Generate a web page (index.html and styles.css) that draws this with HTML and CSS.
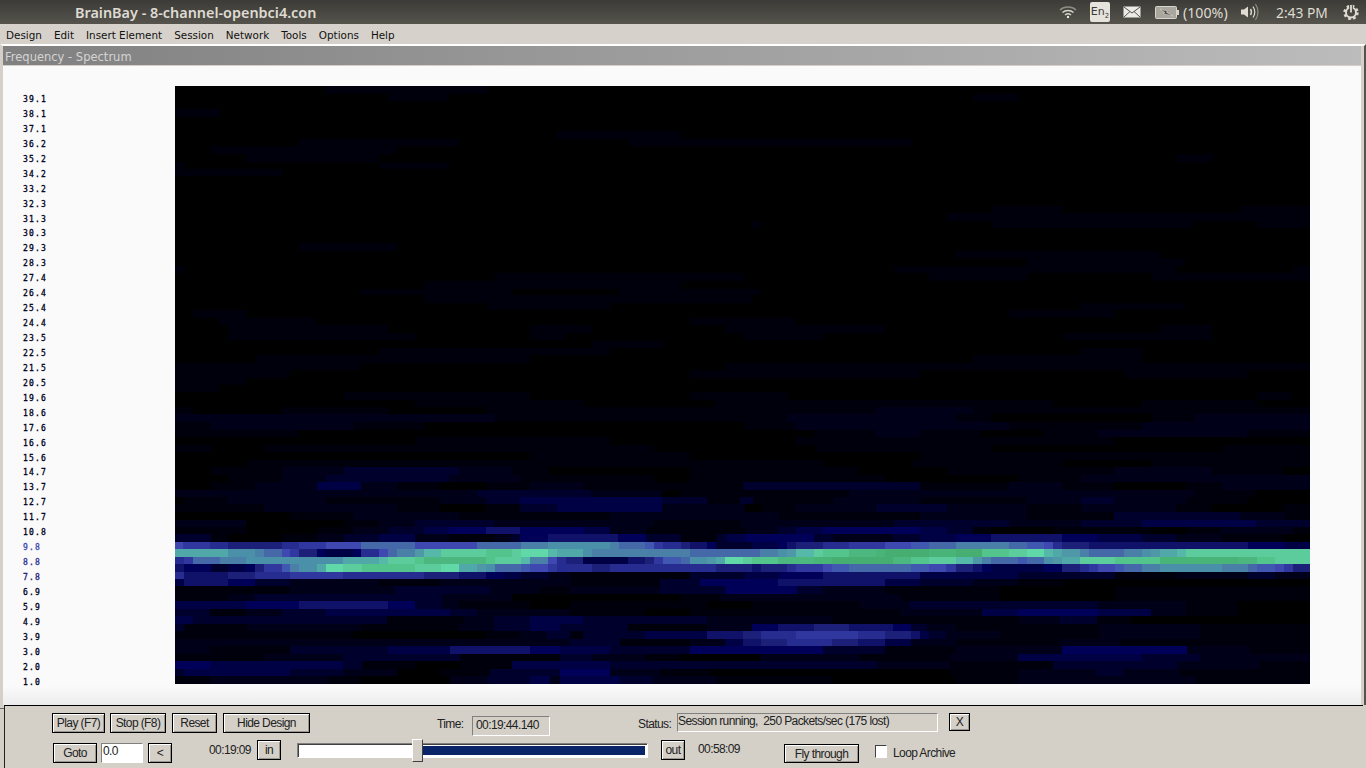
FILE: index.html
```html
<!DOCTYPE html>
<html lang="en">
<head>
    <meta charset="UTF-8">
    <title>BrainBay - 8-channel-openbci4.con</title>
    <link rel="stylesheet" href="styles.css">
</head>
<body>

<header class="topbar">
    <div class="app-title">BrainBay - 8-channel-openbci4.con</div>
    <div class="tray">
        <svg class="tray-wifi" width="18" height="14" viewBox="0 0 18 14" fill="none" stroke="#d8d4cb" stroke-width="1.5">
            <path d="M1 5 C5 1 13 1 17 5" stroke="#8f8c85"/>
            <path d="M3.5 7.5 C6.5 4.8 11.5 4.8 14.5 7.5"/>
            <path d="M6 10 C8 8.4 10 8.4 12 10"/>
            <circle cx="9" cy="12" r="1.2" fill="#ecebe6" stroke="none"/>
        </svg>
        <div class="tray-lang">En<sub>2</sub></div>
        <svg class="tray-mail" width="18" height="12" viewBox="0 0 18 12">
            <rect x="0.5" y="0.5" width="17" height="11" fill="#ecebe6"/>
            <path d="M1 1 L9 7 L17 1 M1 11 L7 5.5 M17 11 L11 5.5" fill="none" stroke="#55534d"/>
        </svg>
        <svg class="tray-battery" width="24" height="13" viewBox="0 0 24 13">
            <rect x="0.5" y="0.5" width="21" height="12" rx="1" fill="#a9a69e" stroke="#d8d4cb"/>
            <rect x="22" y="4" width="2" height="5" fill="#d8d4cb"/>
            <path d="M5 3 L13 5.6 L11.5 6.4 L18 10 L8 7.4 L10 6.4 Z" fill="#3c3b37" stroke="#e6e3dc" stroke-width="0.5"/>
        </svg>
        <div class="tray-text tray-pct">(100%)</div>
        <svg class="tray-sound" width="20" height="18" viewBox="0 0 20 18" fill="none">
            <path d="M1 6.5 H4 L8 3.5 V14.5 L4 11.5 H1 Z" fill="#dfdbd2"/>
            <path d="M10.5 6 C11.8 8 11.8 10 10.5 12" stroke="#dfdbd2" stroke-width="1.4"/>
            <path d="M13 3.5 C15.3 7 15.3 11 13 14.5" stroke="#dfdbd2" stroke-width="1.2"/>
            <path d="M15.5 1 C18.6 6 18.6 12 15.5 17" stroke="#8f8c85" stroke-width="1.2"/>
        </svg>
        <div class="tray-text tray-clock">2:43 PM</div>
        <svg class="tray-power" width="16" height="16" viewBox="0 0 16 16" fill="none" stroke="#dfdbd2">
            <circle cx="8" cy="8.5" r="5" stroke-width="2"/>
            <circle cx="8" cy="8.5" r="6.5" stroke-width="2.4" stroke-dasharray="2.6 2.5"/>
            <path d="M8 1 V9" stroke="#47453f" stroke-width="3.6"/>
            <path d="M8 1 V8.5" stroke-width="1.8"/>
        </svg>
    </div>
</header>

<nav class="menubar">
    <span>Design</span>
    <span>Edit</span>
    <span>Insert Element</span>
    <span>Session</span>
    <span>Network</span>
    <span>Tools</span>
    <span>Options</span>
    <span>Help</span>
</nav>

<main class="window">
    <div class="window-title">Frequency - Spectrum</div>
    <div class="spectrum-view">
        <ul class="freq-labels">
            <li>39.1</li><li>38.1</li><li>37.1</li><li>36.2</li><li>35.2</li>
            <li>34.2</li><li>33.2</li><li>32.3</li><li>31.3</li><li>30.3</li>
            <li>29.3</li><li>28.3</li><li>27.4</li><li>26.4</li><li>25.4</li>
            <li>24.4</li><li>23.5</li><li>22.5</li><li>21.5</li><li>20.5</li>
            <li>19.6</li><li>18.6</li><li>17.6</li><li>16.6</li><li>15.6</li>
            <li>14.7</li><li>13.7</li><li>12.7</li><li>11.7</li><li>10.8</li>
            <li class="lvl-high">9.8</li><li class="lvl-mid">8.8</li><li class="lvl-low">7.8</li>
            <li>6.9</li><li>5.9</li><li>4.9</li><li>3.9</li><li>3.0</li><li>2.0</li><li>1.0</li>
        </ul>
        <canvas id="spectrum" width="1135" height="598"></canvas>
    </div>
</main>

<section class="controls">
    <div class="ctl-row ctl-row-top">
        <button class="btn btn-play">Play (F7)</button>
        <button class="btn btn-stop">Stop (F8)</button>
        <button class="btn btn-reset">Reset</button>
        <button class="btn btn-hide">Hide Design</button>
        <span class="lbl lbl-time">Time:</span>
        <div class="readout readout-time">00:19:44.140</div>
        <span class="lbl lbl-status">Status:</span>
        <div class="readout readout-status">Session running,&nbsp; 250 Packets/sec (175 lost)</div>
        <button class="btn btn-close">X</button>
    </div>
    <div class="ctl-row ctl-row-bottom">
        <button class="btn btn-goto">Goto</button>
        <div class="goto-input">0.0</div>
        <button class="btn btn-prev">&lt;</button>
        <span class="lbl lbl-start">00:19:09</span>
        <button class="btn btn-in">in</button>
        <div class="slider">
            <div class="slider-left"></div>
            <div class="slider-right"></div>
            <div class="slider-thumb"></div>
        </div>
        <button class="btn btn-out">out</button>
        <span class="lbl lbl-end">00:58:09</span>
        <button class="btn btn-fly">Fly through</button>
        <div class="checkbox"></div>
        <span class="lbl lbl-loop">Loop Archive</span>
    </div>
</section>

<script src="spectrum.js"></script>
</body>
</html>
```

FILE: styles.css
```css
body {
    margin: 0;
    width: 1366px;
    height: 768px;
    overflow: hidden;
    display: flex;
    flex-direction: column;
    background-color: #d4d0c8;
    font-family: 'Liberation Sans', Arial, sans-serif;
}

/* desktop panel */
.topbar {
    height: 24px;
    flex: none;
    display: flex;
    align-items: center;
    justify-content: space-between;
    background: linear-gradient(#3c3b37, #55534c);
    color: #dfdbd2;
}
.app-title {
    margin-left: 75px;
    font-family: 'Noto Sans', sans-serif;
    font-size: 14.4px;
    font-weight: 600;
    white-space: nowrap;
}
.tray {
    display: flex;
    align-items: center;
    height: 24px;
}
.tray-wifi { margin-right: 13px; }
.tray-lang {
    width: 20px;
    height: 20px;
    border-radius: 2px;
    background-color: #e6e3dc;
    color: #3c3b37;
    font-family: 'DejaVu Sans', sans-serif;
    font-size: 11px;
    line-height: 20px;
    text-align: center;
    margin-right: 13px;
}
.tray-lang sub {
    font-size: 7px;
    line-height: 0;
}
.tray-mail { margin-right: 14px; }
.tray-battery { margin-right: 4px; }
.tray-text {
    font-family: 'Noto Sans', sans-serif;
    white-space: nowrap;
}
.tray-pct { width: 45px; margin-right: 12px; font-size: 14.2px; }
.tray-sound { margin-right: 16px; }
.tray-clock { width: 53px; margin-right: 14px; font-size: 13.8px; }
.tray-power { margin-right: 7px; }

/* app menu */
.menubar {
    box-sizing: border-box;
    height: 20px;
    flex: none;
    display: flex;
    align-items: center;
    background-color: #d6d2cb;
    font-family: 'DejaVu Sans', sans-serif;
    font-size: 10.4px;
    color: #111;
    padding: 2px 0 0 6px;
    gap: 12px;
}

/* mdi child window */
.window {
    flex: 1;
    min-height: 0;
    display: flex;
    flex-direction: column;
    border-top: 2px solid #fff;
    border-left: 3px solid #d4d0c8;
    border-right: 2px solid #55534c;
    box-shadow: inset -3px 0 0 #d4d0c8;
}
.window-title {
    height: 19px;
    flex: none;
    margin-right: 3px;
    background: linear-gradient(to right, #808080, #bcbcbc);
    color: #d4d4d4;
    font-family: 'DejaVu Sans', sans-serif;
    font-size: 11.5px;
    line-height: 22px;
    padding-left: 2px;
    border-bottom: 1px solid #d4d0c8;
    white-space: nowrap;
    overflow: hidden;
}
.spectrum-view {
    flex: 1;
    min-height: 0;
    margin-right: 3px;
    display: flex;
    background: linear-gradient(#fafafa 0, #fafafa 620px, #ececec 100%);
    padding: 20px 0 0 20px;
}
.freq-labels {
    list-style-type: none;
    margin: 7px 0 0 0;
    padding: 0;
    width: 152px;
    display: grid;
    grid-auto-rows: 14.94px;
    align-content: start;
    font-family: 'DejaVu Sans Mono', monospace;
    font-size: 8px;
    letter-spacing: 1.2px;
    color: #000020;
    -webkit-text-stroke: 0.3px;
}
.freq-labels li {
    line-height: 14.94px;
    white-space: nowrap;
}
.freq-labels .lvl-high { color: #3f48b0; }
.freq-labels .lvl-mid { color: #2a3090; }
.freq-labels .lvl-low { color: #1c2078; }
#spectrum {
    display: block;
    width: 1135px;
    height: 598px;
    background-color: #000;
}

/* transport panel */
.controls {
    position: relative;
    height: 62px;
    flex: none;
    margin: 0 3px 0 4px;
    border-top: 1px solid #000;
    border-left: 1px solid #222;
    background-color: #d4d0c8;
    font-size: 12px;
    letter-spacing: -0.6px;
    color: #222;
}
.controls::before {
    content: "";
    position: absolute;
    left: -5px;
    top: 2px;
    width: 4px;
    height: 1px;
    background-color: #666;
}
.ctl-row {
    display: flex;
    align-items: flex-start;
}
.ctl-row-top {
    height: 26px;
    padding: 7px 0 0 47px;
}
.ctl-row-bottom {
    height: 23px;
    padding: 0 0 0 48px;
}
.btn {
    box-sizing: border-box;
    height: 20px;
    padding: 0;
    background-color: #d4d0c8;
    border: 1px solid #000;
    box-shadow: inset 1px 1px 0 #fff, inset -1px -1px 0 #9a978f;
    font-family: inherit;
    font-size: inherit;
    letter-spacing: inherit;
    color: #222;
    flex: none;
}
.lbl {
    flex: none;
    white-space: nowrap;
    line-height: 20px;
}
.readout {
    box-sizing: border-box;
    flex: none;
    border: 1px solid;
    border-color: #808080 #fff #fff #808080;
    white-space: nowrap;
}

.btn-play { width: 53px; }
.btn-stop { width: 56px; margin-left: 5px; }
.btn-reset { width: 45px; margin-left: 6px; }
.btn-hide { width: 87px; margin-left: 6px; }
.lbl-time { width: 35px; margin: 1px 0 0 127px; }
.readout-time {
    width: 78px;
    height: 20px;
    margin-top: 3px;
    line-height: 17px;
    padding-left: 3px;
}
.lbl-status { width: 32px; margin: 1px 0 0 88px; }
.readout-status {
    width: 261px;
    height: 19px;
    margin-left: 7px;
    line-height: 14px;
    padding-left: 0;
}
.btn-close { width: 21px; height: 18px; margin-left: 11px; }

.btn-goto { width: 44px; margin-top: 4px; }
.goto-input {
    box-sizing: border-box;
    flex: none;
    width: 42px;
    height: 20px;
    margin: 4px 0 0 4px;
    background-color: #fff;
    border: 1px solid;
    border-color: #808080 #fff #fff #808080;
    line-height: 15px;
    padding-left: 1px;
}
.btn-prev { width: 24px; margin: 4px 0 0 5px; }
.lbl-start { width: 43px; margin: 1px 0 0 37px; }
.btn-in { width: 24px; margin: 1px 0 0 5px; }
.slider {
    position: relative;
    box-sizing: border-box;
    flex: none;
    display: flex;
    width: 351px;
    height: 15px;
    margin: 4px 0 0 16px;
    border: 1px solid;
    border-color: #808080 #fff #fff #808080;
    background-color: #fff;
    box-shadow: inset 1px 1px 0 #404040;
}
.slider-left { width: 120px; }
.slider-right {
    flex: 1;
    margin: 2px;
    background-color: #0a246a;
}
.slider-thumb {
    position: absolute;
    left: 114px;
    top: -5px;
    box-sizing: border-box;
    width: 11px;
    height: 23px;
    background-color: #d4d0c8;
    border: 1px solid;
    border-color: #fff #404040 #404040 #fff;
}
.btn-out { width: 24px; margin: 1px 0 0 13px; }
.lbl-end { width: 42px; margin: 0 0 0 13px; }
.btn-fly { width: 75px; height: 19px; margin: 5px 0 0 44px; }
.checkbox {
    box-sizing: border-box;
    flex: none;
    width: 12px;
    height: 13px;
    margin: 6px 0 0 16px;
    background-color: #fff;
    border: 1px solid;
    border-color: #404040 #fff #fff #404040;
}
.lbl-loop { margin: 4px 0 0 6px; }
```

FILE: spectrum.js
```js
// Spectrum picture: every row is [top, bottom, runs], in page pixels.
// A run is a colour key and the x where it ends, "_" leaves the row black.
const ORIGIN_X = 175;
const ORIGIN_Y = 86;

const colors = {
    a: "#00000c", b: "#000018", c: "#00002c", d: "#000044", e: "#000058",
    f: "#10126a", g: "#1c2078", h: "#262c90", i: "#3038a0", j: "#3f48b0",
    k: "#4058b0", l: "#4568a8", m: "#4a80a8", n: "#4a90a8", o: "#4f98a8",
    p: "#50a8a8", q: "#55b8a8", r: "#5ccc9c", s: "#60d8a8", t: "#52c48c",
    u: "#4cb880", v: "#48b478", w: "#45ae70"
};

const rows = [
    [86, 94, "_326 a487"],
    [94, 101, "_388 a449 _973 a1018"],
    [109, 117, "a220"],
    [131, 139, "_557 a681"],
    [139, 146, "_299 a459 _628 a911"],
    [146, 154, "_211 a397"],
    [154, 162, "_246 a379 _1177 a1213"],
    [162, 169, "a184 _379 a449"],
    [169, 176, "a282"],
    [206, 213, "_991 a1062 _1240 a1310"],
    [213, 221, "_947 a1310"],
    [221, 228, "_752 a761 _991 a1194 _1257 a1310"],
    [243, 251, "_299 a397"],
    [251, 258, "_956 a1160"],
    [258, 266, "_1027 a1185"],
    [266, 273, "a184 _894 a1176 _1293 a1310"],
    [273, 281, "_495 a743 _929 a1027 _1152 a1310"],
    [281, 289, "_424 a681"],
    [289, 295, "_361 a512 _619 a761"],
    [295, 303, "_424 a752"],
    [303, 310, "_487 a611 _1081 a1185"],
    [310, 318, "_193 a246 _1009 a1114"],
    [318, 325, "_219 a317 _690 a796"],
    [325, 333, "_228 a388 _530 a591 _725 a885 _1160 a1212"],
    [333, 340, "_228 a415 _530 a565 _742 a823 _1062 a1212"],
    [341, 348, "_592 a663"],
    [348, 355, "_379 a610 _1081 a1142"],
    [355, 363, "_255 a530 _973 a1142"],
    [363, 370, "a361 _725 a1310"],
    [370, 378, "a290 _690 a920 _1124 a1247"],
    [378, 385, "a246"],
    [385, 392, "a219"],
    [392, 400, "_344 a530 _690 a787 _1257 a1292"],
    [400, 407, "_415 a583 _715 a1053 _1142 a1257"],
    [407, 414, "a193 _282 a388 _486 a876 b973 a1310"],
    [414, 422, "b495 a787 b956 a991 _1152 a1195 b1310"],
    [422, 430, "a211 b353 a424 _745 a796 b1009 a1142 b1310"],
    [430, 437, "a299 _814 a876 b920 a981 _1043 a1098 b1247 a1310"],
    [437, 445, "_415 a610 _796 a1114"],
    [445, 452, "a211 _264 a654 _815 a991 _1222 a1310"],
    [452, 460, "_530 a690 _920 a1310"],
    [460, 467, "_246 a823 _911 a1062 _1151 a1310"],
    [467, 475, "_211 a282 b344 c459 b512 a549 _690 a858 _947 a1114 b1212 a1283"],
    [475, 482, "_228 a282 b326 c449 b520 a654 _690 a885 _1018 a1081 b1310"],
    [482, 490, "_211 a255 b317 d361 b397 a440 _486 a530 b583 a743 c920 a1009 b1062 a1114 _1186 a1222 b1310"],
    [490, 497, "b477 c591 b662 _680 a849 b1194 a1256"],
    [497, 504, "_184 a228 b326 a440 b486 c520 d662 c707 a740 c753 a833 b920 a1027 b1081 c1114 b1186 a1247"],
    [504, 512, "a264 b397 a440 _486 a520 c557 d662 b745 _762 a796 b876 c947 b1027 a1081 b1176 a1212 _1283 a1310"],
    [512, 520, "_290 a353 b459 a610 b778 a920 b1027 a1114 c1240 b1284 a1310"],
    [520, 527, "b246 _344 a379 b415 c494 b654 a740 b894 c1009 b1081 c1142 d1256 c1310"],
    [527, 534, "a246 _317 a353 b388 c424 d449 e486 f520 e584 d610 b646 a745 b778 c796 d823 e920 d947 c973 a991 _1053 a1151 _1187 a1221 b1293 a1310"],
    [534, 542, "c211 a228 _282 a317 b344 c379 d415 b449 a494 b511 c520 e548 f618 e646 c681 a717 c726 d745 e814 c833 b893 c920 d956 e991 f1062 e1098 d1142 c1176 b1221 a1283"],

    // alpha band
    [542, 549, "j183 i210 h228 g282 h299 i326 j361 l415 j477 l521 m548 n610 m619 l645 k654 i663 h681 g690 f707 e716 c752 d778 e787 f796 g823 h849 i885 j911 k929 l956 m1009 l1027 k1044 j1053 h1062 g1089 f1248 e1284 d1310"],
    [549, 557, "p228 n255 m264 l282 j290 i299 g317 e326 d353 e361 h379 j388 l397 m415 o424 q441 r486 t512 r521 s548 q557 p583 n592 m690 l760 m778 n787 o796 q814 r823 t849 u876 v885 w929 v956 w982 t1009 r1027 s1044 q1053 p1062 o1080 m1089 l1124 m1142 n1151 o1160 p1177 q1186 r1310"],
    [557, 564, "h184 i193 l220 m246 n343 p379 q388 r415 t424 u486 t495 r521 q530 m548 j557 h566 g583 d628 f645 g654 i663 k681 l690 n707 o716 p725 s743 r752 t778 u814 v832 w893 u911 t929 r956 q973 o982 m991 l1018 k1027 l1044 n1053 o1062 p1080 r1115 t1160 v1239 u1257 t1275 r1310"],
    [564, 572, "f184 e211 c228 d246 e255 g264 i282 k290 m299 n317 p326 s343 r362 t415 r441 s459 p477 o486 n495 l521 k530 j548 i557 h592 g610 h716 g752 f761 g787 h796 i823 j832 k849 l911 k929 j946 i956 g973 f982 e991 d1044 e1062 g1080 h1089 i1098 j1115 k1124 l1142 m1160 n1222 m1248 l1257 k1275 j1284 i1293 g1310"],
    [572, 579, "h184 f228 g255 h290 i343 h424 g459 f486 e503 d521 c548 b570 a690 c745 d780 e823 f920 d1018 c1115 a1177 b1248 c1275 b1310"],

    // low frequencies
    [579, 586, "d184 f228 e255 c290 b379 a440 b570 a660 c700 e778 f885 d920 c973 b1018 a1063"],
    [586, 594, "a290 b395 c490 b540 a570 b660 c725 e797 c823 b885 a1000 _1115 a1310"],
    [594, 601, "a228 b255 c442 b512 _680 a720 b900 a1000 _1115 a1310"],
    [601, 609, "d246 e299 f388 e415 c442 b459 a530 _570 a707 _752 a860 b910 c1098 b1186 a1238"],
    [609, 616, "c210 a246 b282 c326 d450 c477 b570 a645 _690 a900 b982 d1018 e1098 d1151 b1186 a1238"],
    [616, 624, "d193 c387 a464 b494 c530 d583 c707 b832 a1020 b1060 c1097 a1130"],
    [624, 631, "c184 a247 b361 a459 b494 c530 d560 c628 a707 b752 e778 f814 g849 f893 e911 c927 b956 a1100 b1200 a1310"],
    [631, 639, "a353 _486 a520 b547 c570 a583 c645 d707 f743 g761 h796 i858 h885 g911 f920 d929 c946 b1000 a1100 b1200 a1310"],
    [639, 646, "b570 c620 a690 b725 d743 f761 g787 h832 g858 f885 d911 b956 a1060 b1120 a1310"],
    [646, 654, "b210 a290 c388 d450 f530 e560 d610 c690 e823 c885 a956 b1062 e1187 b1250 a1310"],
    [654, 661, "a264 b343 c460 a560 c592 b645 a680 _760 b860 a950 b1018 d1142 c1200 b1310"],
    [661, 669, "e210 d343 c362 a415 _460 a512 d610 c877 b950 a1053 c1177 b1260 a1310"],
    [669, 676, "c184 d290 c343 b397 _440 a490 c560 e610 b660 a710 _950 a1018 b1097 c1123 b1180 a1310"],
    [676, 684, "a210 b327 a360 _450 b487 c530 d550 b560 d620 c653 b717 a832 _956 a1018 b1195 a1310"]
];

function drawSpectrum() {
    const ctx = document.getElementById("spectrum").getContext("2d");
    ctx.fillStyle = "#000";
    ctx.fillRect(0, 0, 1135, 598);

    rows.forEach(([top, bottom, runs]) => {
        let x = ORIGIN_X;
        runs.split(" ").forEach(run => {
            const end = parseInt(run.slice(1), 10);
            if (run[0] !== "_") {
                ctx.fillStyle = colors[run[0]];
                ctx.fillRect(x - ORIGIN_X, top - ORIGIN_Y, end - x, bottom - top);
            }
            x = end;
        });
    });
}

drawSpectrum();
```
